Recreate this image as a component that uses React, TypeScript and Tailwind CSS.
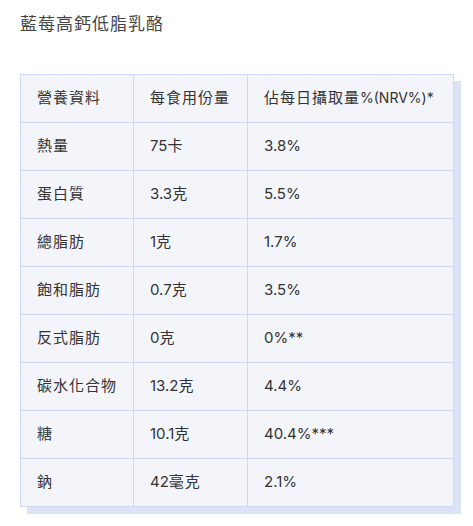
import type { ReactNode } from "react";

const rows: [string, string, string][] = [
  ["熱量", "75卡", "3.8%"],
  ["蛋白質", "3.3克", "5.5%"],
  ["總脂肪", "1克", "1.7%"],
  ["飽和脂肪", "0.7克", "3.5%"],
  ["反式脂肪", "0克", "0%**"],
  ["碳水化合物", "13.2克", "4.4%"],
  ["糖", "10.1克", "40.4%***"],
  ["鈉", "42毫克", "2.1%"],
];

const cell = "border border-[#cfd8f6] h-12 px-4 align-middle font-normal text-left whitespace-nowrap";

// CJK runs sit a little looser than the latin digits
function T({ text }: { text: string }) {
  const parts: ReactNode[] = text.split(/([\u3000-\u9fff]+)/).map((p, i) =>
    /[\u3000-\u9fff]/.test(p) ? (
      <span key={i} className="tracking-[1px]">
        {p}
      </span>
    ) : (
      p
    )
  );
  return <>{parts}</>;
}

export default function App() {
  return (
    <div
      className="w-[473px] h-[526px] bg-white px-5 pt-[12px] text-[#333]"
      style={{ fontFamily: 'Inter, "Noto Sans CJK TC", sans-serif' }}
    >
      <h1 className="text-[17px] leading-6 text-[#444] font-normal tracking-[1px]">藍莓高鈣低脂乳酪</h1>
      <div className="mt-[38px] w-[434px] shadow-[7px_7px_0_0_#dde3f7]">
        <table className="w-full table-fixed border-collapse bg-[#f4f5fb] text-[15px]">
          <thead>
            <tr>
              <th className={`${cell} w-[113px]`}><T text="營養資料" /></th>
              <th className={`${cell} w-[114px]`}><T text="每食用份量" /></th>
              <th className={cell}>
                <T text="佔每日攝取量" />
                <span className="text-[14px]">%(NRV%)*</span>
              </th>
            </tr>
          </thead>
          <tbody>
            {rows.map(([a, b, c]) => (
              <tr key={a}>
                <td className={cell}><T text={a} /></td>
                <td className={cell}><T text={b} /></td>
                <td className={cell}>{c}</td>
              </tr>
            ))}
          </tbody>
        </table>
      </div>
    </div>
  );
}
